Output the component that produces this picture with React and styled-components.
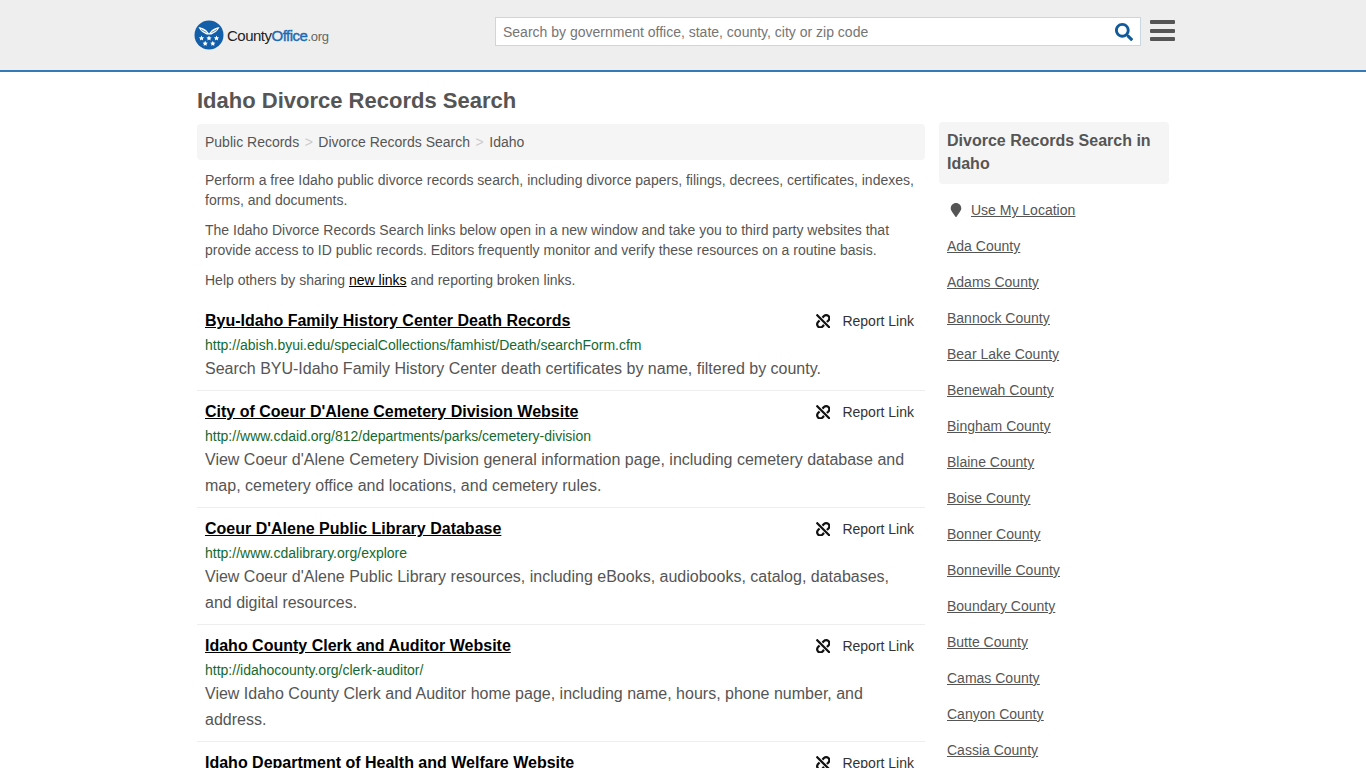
import React from "react";
import styled, { createGlobalStyle } from "styled-components";
import { FaSearch, FaUnlink, FaMapMarker } from "react-icons/fa";

const records = [
  {
    title: "Byu-Idaho Family History Center Death Records",
    url: "http://abish.byui.edu/specialCollections/famhist/Death/searchForm.cfm",
    text: "Search BYU-Idaho Family History Center death certificates by name, filtered by county.",
  },
  {
    title: "City of Coeur D'Alene Cemetery Division Website",
    url: "http://www.cdaid.org/812/departments/parks/cemetery-division",
    text: "View Coeur d'Alene Cemetery Division general information page, including cemetery database and map, cemetery office and locations, and cemetery rules.",
  },
  {
    title: "Coeur D'Alene Public Library Database",
    url: "http://www.cdalibrary.org/explore",
    text: "View Coeur d'Alene Public Library resources, including eBooks, audiobooks, catalog, databases, and digital resources.",
  },
  {
    title: "Idaho County Clerk and Auditor Website",
    url: "http://idahocounty.org/clerk-auditor/",
    text: "View Idaho County Clerk and Auditor home page, including name, hours, phone number, and address.",
  },
  {
    title: "Idaho Department of Health and Welfare Website",
  },
];

const counties = [
  "Ada", "Adams", "Bannock", "Bear Lake", "Benewah", "Bingham", "Blaine", "Boise",
  "Bonner", "Bonneville", "Boundary", "Butte", "Camas", "Canyon", "Cassia",
];

const GlobalStyle = createGlobalStyle`
  html, body {
    margin: 0;
    padding: 0;
    height: 768px;
    overflow: hidden;
    background: #fff;
    font-family: "Liberation Sans", Arial, sans-serif;
    color: #555;
  }
`;

const Header = styled.header`
  height: 70px;
  background: #eee;
  border-bottom: 2px solid #337ab7;
  display: flex;
  justify-content: center;
`;

const HeaderInner = styled.div`
  width: 972px;
  display: flex;
  align-items: flex-start;
`;

const Logo = styled.a`
  flex: none;
  display: flex;
  align-items: center;
  width: 301px;
  margin-left: -3px;
  margin-top: 20px;
  height: 30px;
  text-decoration: none;
`;

const LogoText = styled.span`
  margin-left: 3px;
  font-size: 15px;
  letter-spacing: -0.5px;
  color: #222;
  b {
    font-weight: 400;
    color: #1b6ab5;
    -webkit-text-stroke: 0.4px #1b6ab5;
  }
  small {
    font-size: 13px;
    color: #666;
    letter-spacing: -0.3px;
  }
`;

const SearchBox = styled.div`
  flex: none;
  box-sizing: border-box;
  margin-top: 17px;
  width: 646px;
  height: 29px;
  background: #fff;
  border: 1px solid #c9d7e3;
  display: flex;
  align-items: center;
  justify-content: space-between;
  padding: 0 7px 0 7px;
  font-size: 14px;
  color: #757575;
`;

const SearchIcon = styled(FaSearch)`
  font-size: 18px;
  color: #0f5a9c;
`;

const Burger = styled.div`
  flex: none;
  margin: 20px 0 0 9px;
  width: 25px;
  display: flex;
  flex-direction: column;
  gap: 4.6px;
`;

const BurgerBar = styled.span`
  height: 4px;
  border-radius: 1px;
  background: #555;
`;

const Page = styled.div`
  width: 972px;
  margin: 0 auto;
`;

const Title = styled.h1`
  margin: 0;
  padding-top: 16px;
  height: 34px;
  line-height: 26px;
  font-size: 22px;
  font-weight: 700;
  color: #555;
`;

const Columns = styled.div`
  display: flex;
  gap: 14px;
  align-items: flex-start;
`;

const Main = styled.main`
  width: 728px;
  flex: none;
  padding-top: 2px;
`;

const Breadcrumb = styled.nav`
  height: 36px;
  background: #f5f5f5;
  border-radius: 4px;
  padding: 0 8px;
  display: flex;
  align-items: center;
  font-size: 14px;
  color: #555;
`;

const Crumb = styled.span`
  & + &::before {
    content: ">";
    color: #ccc;
    padding: 0 5.5px;
  }
`;

const Intro = styled.p`
  margin: 10px 8px 0;
  font-size: 14px;
  line-height: 20px;
  color: #555;
  a {
    color: #000;
    text-decoration: underline;
  }
`;

const Record = styled.article`
  padding: 10px 11px 8px 8px;
  border-bottom: 1px solid #eee;
  &:first-of-type {
    padding-top: 20px;
  }
`;

const RecordHead = styled.div`
  display: flex;
  justify-content: space-between;
  align-items: center;
  height: 22px;
`;

const RecordTitle = styled.a`
  font-size: 16px;
  font-weight: 700;
  color: #000;
  text-decoration: underline;
`;

const Report = styled.span`
  display: flex;
  align-items: center;
  gap: 12px;
  font-size: 14px;
  color: #333;
  svg {
    font-size: 14.5px;
    color: #111;
  }
`;

const RecordUrl = styled.div`
  margin-top: 3px;
  font-size: 14px;
  line-height: 21px;
  color: #13692f;
`;

const RecordText = styled.div`
  font-size: 16px;
  line-height: 26px;
  color: #555;
`;

const Side = styled.aside`
  width: 230px;
  flex: none;
`;

const SideTitle = styled.h2`
  margin: 0 0 8px;
  padding: 7px 8px 9px;
  background: #f5f5f5;
  border-radius: 4px;
  font-size: 16px;
  line-height: 23px;
  font-weight: 700;
  color: #555;
`;

const SideLink = styled.a`
  display: flex;
  align-items: center;
  height: 36px;
  padding-left: 8px;
  font-size: 14px;
  color: #555;
  span {
    text-decoration: underline;
  }
  svg {
    font-size: 14px;
    margin: 0 8px 0 2px;
  }
`;

const LogoMark = () => (
  <svg width="30" height="30" viewBox="0 0 30 30" aria-hidden="true">
    <circle cx="15" cy="15" r="14.5" fill="#135ea8" />
    <path d="M4.500 7c3 .5 6 1.700 8 3.500l2.500 3 2.500-3c2-1.800 5-3 8-3.500-1 2.500-3 5-5.500 6l-2.500 1.500h-5L10 13C7.500 12 5.500 9.500 4.500 7z" fill="#fff" />
    <path d="M7 9.500l5.500 3M23 9.500l-5.500 3" stroke="#135ea8" strokeWidth=".7" />
    <g fill="#fff">
      <path d="M7.500 15.500l.8 1.700 1.800.2-1.300 1.300.3 1.800-1.600-.9-1.600.9.300-1.800-1.300-1.300 1.800-.2z" />
      <path d="M15 15.500l.8 1.700 1.800.2-1.300 1.300.3 1.800-1.600-.9-1.600.9.300-1.800-1.300-1.300 1.800-.2z" />
      <path d="M22.500 15.500l.8 1.700 1.800.2-1.300 1.300.3 1.800-1.600-.9-1.600.9.300-1.800-1.300-1.300 1.800-.2z" />
      <path d="M11.200 20.800l.8 1.700 1.800.2-1.300 1.300.3 1.800-1.600-.9-1.600.9.300-1.800-1.300-1.300 1.800-.2z" />
      <path d="M18.800 20.800l.8 1.700 1.800.2-1.300 1.300.3 1.800-1.600-.9-1.600.9.300-1.800-1.300-1.300 1.800-.2z" />
    </g>
  </svg>
);

export default function App() {
  return (
    <>
      <GlobalStyle />
      <Header>
        <HeaderInner>
          <Logo href="#">
            <LogoMark />
            <LogoText>
              County<b>Office</b>
              <small>.org</small>
            </LogoText>
          </Logo>
          <SearchBox>
            <span>Search by government office, state, county, city or zip code</span>
            <SearchIcon />
          </SearchBox>
          <Burger>
            <BurgerBar />
            <BurgerBar />
            <BurgerBar />
          </Burger>
        </HeaderInner>
      </Header>
      <Page>
        <Title>Idaho Divorce Records Search</Title>
        <Columns>
          <Main>
            <Breadcrumb>
              <Crumb>Public Records</Crumb>
              <Crumb>Divorce Records Search</Crumb>
              <Crumb>Idaho</Crumb>
            </Breadcrumb>
            <Intro>
              Perform a free Idaho public divorce records search, including divorce papers, filings, decrees, certificates, indexes, forms, and documents.
            </Intro>
            <Intro>
              The Idaho Divorce Records Search links below open in a new window and take you to third party websites that provide access to ID public records. Editors frequently monitor and verify these resources on a routine basis.
            </Intro>
            <Intro>
              Help others by sharing <a href="#">new links</a> and reporting broken links.
            </Intro>
            {records.map((r) => (
              <Record key={r.title}>
                <RecordHead>
                  <RecordTitle href="#">{r.title}</RecordTitle>
                  <Report>
                    <FaUnlink />
                    Report Link
                  </Report>
                </RecordHead>
                {r.url && <RecordUrl>{r.url}</RecordUrl>}
                {r.text && <RecordText>{r.text}</RecordText>}
              </Record>
            ))}
          </Main>
          <Side>
            <SideTitle>Divorce Records Search in Idaho</SideTitle>
            <SideLink href="#">
              <FaMapMarker />
              <span>Use My Location</span>
            </SideLink>
            {counties.map((c) => (
              <SideLink href="#" key={c}>
                <span>{c} County</span>
              </SideLink>
            ))}
          </Side>
        </Columns>
      </Page>
    </>
  );
}
